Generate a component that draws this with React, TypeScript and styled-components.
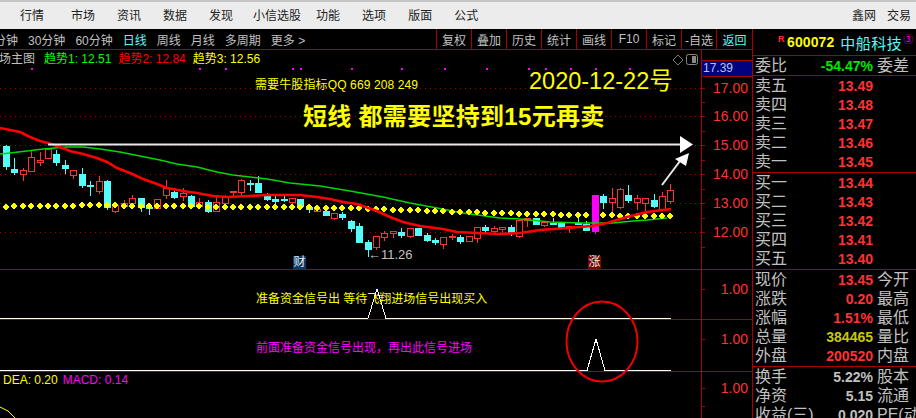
import React from 'react';
import styled, { createGlobalStyle } from 'styled-components';

const RED = '#ff3232';
const GRID = '#a80000';
const CYAN = '#54fcfc';
const YELLOW = '#ffff00';
const MAGENTA = '#ff00ff';
const GREY = '#c0c0c0';

// kind: C falling (filled cyan), H rising (hollow red), R thin red, M limit bar
type Candle = [string, number, number, number, number];

const candles: Candle[] = [
  ['C', 146, 166, 145, 169], ['C', 169, 172, 158, 174], ['H', 170, 174, 168, 180], ['H', 157, 171, 151, 171],
  ['R', 160, 162, 152, 165], ['H', 149, 158, 149, 158], ['C', 154, 162, 150, 165], ['C', 165, 168, 160, 173],
  ['H', 170, 175, 170, 178], ['C', 174, 185, 168, 187], ['C', 185, 186, 181, 195], ['H', 181, 191, 176, 193],
  ['C', 181, 207, 180, 209], ['H', 205, 211, 203, 212], ['H', 203, 206, 200, 207], ['H', 198, 203, 195, 204],
  ['C', 198, 207, 198, 211], ['C', 207, 208, 203, 214], ['H', 199, 208, 199, 208], ['H', 188, 195, 180, 198],
  ['C', 192, 197, 191, 198], ['H', 193, 196, 188, 200], ['C', 196, 206, 195, 207], ['H', 202, 206, 198, 206],
  ['C', 202, 211, 200, 212], ['H', 202, 211, 197, 211], ['H', 197, 203, 195, 203], ['R', 191, 192, 191, 197],
  ['H', 180, 192, 179, 194], ['C', 183, 184, 180, 190], ['C', 183, 192, 176, 192], ['C', 196, 199, 193, 200],
  ['C', 199, 201, 196, 205], ['C', 199, 200, 196, 201], ['H', 198, 202, 198, 203], ['C', 199, 206, 199, 206],
  ['C', 207, 209, 205, 212], ['R', 209, 211, 208, 211], ['C', 211, 215, 211, 215], ['H', 213, 218, 213, 219],
  ['C', 214, 217, 212, 219], ['C', 221, 228, 220, 231], ['C', 226, 242, 223, 242], ['C', 242, 249, 240, 256],
  ['H', 236, 247, 236, 249], ['H', 233, 237, 231, 240], ['H', 231, 233, 231, 237], ['C', 232, 235, 228, 237],
  ['H', 228, 236, 228, 237], ['C', 228, 235, 228, 235], ['C', 235, 240, 233, 241], ['C', 240, 242, 238, 244],
  ['H', 237, 244, 237, 248], ['R', 236, 237, 234, 239], ['C', 237, 241, 235, 243], ['H', 236, 241, 236, 241],
  ['H', 227, 238, 227, 242], ['C', 227, 230, 225, 232], ['H', 228, 231, 226, 233], ['R', 227, 229, 227, 232],
  ['C', 227, 233, 225, 235], ['H', 220, 236, 220, 237], ['R', 218, 220, 218, 226], ['C', 218, 224, 218, 224],
  ['H', 222, 225, 222, 226], ['C', 223, 224, 218, 224], ['C', 223, 228, 223, 228], ['H', 226, 228, 226, 232],
  ['C', 223, 224, 217, 224], ['C', 224, 230, 221, 230], ['M', 195, 231, 195, 233], ['C', 196, 202, 194, 208],
  ['H', 198, 202, 188, 213], ['H', 189, 207, 188, 208], ['C', 195, 200, 185, 202], ['H', 198, 202, 195, 209],
  ['H', 198, 203, 198, 212], ['C', 200, 206, 194, 207], ['H', 196, 210, 192, 210], ['H', 190, 201, 184, 203],
];

const dotY = (i: number) => {
  if (i === 0) return 207;
  if (i < 9) return 206;
  if (i < 14) return 205;
  if (i < 24) return 206;
  if (i < 37) return 207;
  if (i < 43) return 208;
  if (i < 46) return 209;
  if (i < 50) return 210;
  if (i < 53) return 211;
  if (i < 57) return 212;
  if (i < 61) return 213;
  if (i < 66) return 214;
  if (i < 73) return 215;
  return 216;
};

const candleX = (i: number) => Math.round(6 + i * 8.41) + 0.5;

const redLine =
  '0,128 10,130 20,132 30,137 40,141 48,143 60,147 70,151 83,154 97,158 107,162 117,168 130,173 143,179 157,184 167,188 183,191 197,193 213,196 227,197 250,196 267,195 300,195 317,197 330,199 343,202 357,204 377,211 390,217 403,222 420,226 443,229 457,232 477,233 500,234 520,233 540,230 567,228 592,226 607,223 627,217 647,212 671,209';
const greenLine =
  '0,154 10,153 27,151 43,149 67,147 83,147 100,149 120,152 140,156 160,160 177,164 197,167 217,172 233,175 250,177 267,179 290,183 320,186 350,191 383,197 410,203 437,208 463,213 500,218 520,219 550,222 583,223 613,223 633,221 647,220 667,218';

const gridLines = [88, 116, 145, 174, 203, 232];
const markers = [31, 199, 225, 292, 300, 351, 401, 444, 486, 528, 545, 570, 595, 629];

const sellRows = [
  ['卖五', '13.49'],
  ['卖四', '13.48'],
  ['卖三', '13.47'],
  ['卖二', '13.46'],
  ['卖一', '13.45'],
];
const buyRows = [
  ['买一', '13.44'],
  ['买二', '13.43'],
  ['买三', '13.42'],
  ['买四', '13.41'],
  ['买五', '13.40'],
];
const quoteRows = [
  ['现价', '13.45', '今开', RED],
  ['涨跌', '0.20', '最高', RED],
  ['涨幅', '1.51%', '最低', RED],
  ['总量', '384465', '量比', '#c8c800'],
  ['外盘', '200520', '内盘', RED],
];
const financeRows = [
  ['换手', '5.22%', '股本'],
  ['净资', '5.15', '流通'],
  ['收益(三)', '0.020', 'PE(动)'],
];

const MainChart = () => (
  <PlotSvg viewBox="0 50 701 219" width={701} height={219}>
    {gridLines.map(y => (
      <line key={y} x1={0} x2={701} y1={y + 0.5} y2={y + 0.5} stroke={GRID} strokeDasharray="1 4" />
    ))}
    {markers.map(x => (
      <rect key={x} x={x} y={68} width={2} height={2} fill={MAGENTA} />
    ))}
    {candles.map(([kind, top, bottom, high, low], i) => {
      const x = candleX(i);
      const color = kind === 'C' ? CYAN : kind === 'M' ? MAGENTA : RED;
      const hollow = kind === 'H' || kind === 'R';
      return (
        <g key={i} shapeRendering="crispEdges">
          <line x1={x} x2={x} y1={high} y2={low + 1} stroke={color} />
          <rect
            x={x - 3}
            y={top + 0.5}
            width={6}
            height={Math.max(bottom - top, 1)}
            fill={hollow ? '#000' : color}
            stroke={color}
          />
        </g>
      );
    })}
    <polyline points={greenLine} fill="none" stroke="#00d800" strokeWidth={1.4} />
    {candles.map((_, i) =>
      i === 70 ? null : (
        <path
          key={i}
          transform={`translate(${Math.floor(candleX(i))} ${dotY(i)})`}
          d="M-1 -3h2v1h1v1h1v2h-1v1h-1v1h-2v-1h-1v-1h-1v-2h1v-1h1z"
          fill="#ffff00"
          shapeRendering="crispEdges"
        />
      )
    )}
    <polyline points={redLine} fill="none" stroke="#ff0000" strokeWidth={2.6} />
    <line x1={48} x2={682} y1={144.5} y2={144.5} stroke="#e8e8e8" strokeWidth={2} />
    <polygon points="680,136 693,144.5 680,153" fill="#fff" />
    <line x1={662} y1={185} x2={680} y2={161} stroke="#e8e8e8" strokeWidth={2} />
    <polygon points="689,153 675,159 686,166" fill="#fff" />
  </PlotSvg>
);

const AxisScale = ({ viewBox, height, ticks, labels }: {
  viewBox: string;
  height: number;
  ticks: number[];
  labels: [string, number][];
}) => (
  <AxisSvg viewBox={viewBox} width={50} height={height}>
    {ticks.map(y => (
      <line key={y} x1={0} x2={3} y1={y + 0.5} y2={y + 0.5} stroke={GRID} />
    ))}
    {labels.map(([text, y]) => (
      <AxisText key={y} x={46} y={y + 5} textAnchor="end">{text}</AxisText>
    ))}
  </AxisSvg>
);

const SignalTrace = ({ peakX, peakY, baseY, width }: { peakX: number; peakY: number; baseY: number; width: number }) => (
  <polyline
    points={`0,${baseY} ${peakX - 9},${baseY} ${peakX},${peakY} ${peakX + 9},${baseY} ${width},${baseY}`}
    fill="none"
    stroke="#fff"
    strokeWidth={1}
    shapeRendering="crispEdges"
  />
);

const App = () => (
  <>
    <GlobalStyle />
    <Page>
      <MenuBar>
        <MenuItem>行情</MenuItem>
        <MenuItem $shift={5}>市场</MenuItem>
        <MenuItem>资讯</MenuItem>
        <MenuItem>数据</MenuItem>
        <MenuItem>发现</MenuItem>
        <MenuItem $shift={-2}>小信选股</MenuItem>
        <MenuItem $shift={-7}>功能</MenuItem>
        <MenuItem>选项</MenuItem>
        <MenuItem>版面</MenuItem>
        <MenuItem>公式</MenuItem>
        <MenuRight>
          <span>鑫网</span>
          <span>交易</span>
        </MenuRight>
      </MenuBar>

      <Workspace>
        <ChartColumn>
          <Toolbar>
            <PeriodList>
              <Period>分钟</Period>
              <Period>30分钟</Period>
              <Period>60分钟</Period>
              <Period $active>日线</Period>
              <Period>周线</Period>
              <Period>月线</Period>
              <Period>多周期</Period>
              <Period>更多 &gt;</Period>
            </PeriodList>
            <ToolList>
              <ToolCell>复权</ToolCell>
              <ToolCell>叠加</ToolCell>
              <ToolCell>历史</ToolCell>
              <ToolCell>统计</ToolCell>
              <ToolCell>画线</ToolCell>
              <ToolCell>F10</ToolCell>
              <ToolCell>标记</ToolCell>
              <ToolCell>-自选</ToolCell>
              <ToolCell $active $wide>返回</ToolCell>
            </ToolList>
          </Toolbar>

          <Pane $height={220}>
            <Plot>
              <MainChart />
              <Legend>
                <LegendTitle>场主图</LegendTitle>
                <LegendItem $color="#00ff00">趋势1: 12.51</LegendItem>
                <LegendItem $color="#ff0000">趋势2: 12.84</LegendItem>
                <LegendItem $color={YELLOW}>趋势3: 12.56</LegendItem>
              </Legend>
              <Note $x={255} $y={25} $color={YELLOW} $spacing={0.12}>需要牛股指标QQ 669 208 249</Note>
              <Note $x={529} $y={12} $color={YELLOW} $size={23.5}>2020-12-22号</Note>
              <Note $x={303} $y={47} $color={YELLOW} $size={24} $bold $spacing={0.3}>短线 都需要坚持到15元再卖</Note>
              <Note $x={368} $y={197} $color={GREY} $size={13}>←11.26</Note>
              <Badge $x={293} $bg="#0c3a68">财</Badge>
              <Badge $x={588} $bg="#7a0000">涨</Badge>
              <ToolIcon width={26} height={12} viewBox="0 0 26 12">
                <path d="M6 1l5 5-5 5-5-5z" fill="none" stroke="#777" />
                <rect x="14.5" y="0.5" width="11" height="10" rx="2" fill="none" stroke="#888" />
                <rect x="20" y="2" width="4" height="7" fill="#888" />
              </ToolIcon>
            </Plot>
            <Axis>
              <PriceTag>17.39</PriceTag>
              <AxisScale
                viewBox="0 50 50 219"
                height={219}
                ticks={[88, 102, 116, 131, 145, 160, 174, 189, 203, 218, 232, 247]}
                labels={[['17.00', 88], ['16.00', 116], ['15.00', 145], ['14.00', 174], ['13.00', 203], ['12.00', 232]]}
              />
            </Axis>
          </Pane>

          <Pane $height={50}>
            <Plot>
              <PlotSvg viewBox="0 270 701 49" width={701} height={49}>
                <SignalTrace peakX={377} peakY={289} baseY={318.5} width={671} />
              </PlotSvg>
              <Note $x={256} $y={19} $color={YELLOW}>准备资金信号出 等待飞翔进场信号出现买入</Note>
            </Plot>
            <Axis>
              <AxisScale viewBox="0 270 50 49" height={49} ticks={[289]} labels={[['1.00', 289]]} />
            </Axis>
          </Pane>

          <Pane $height={52}>
            <Plot>
              <PlotSvg viewBox="0 320 701 51" width={701} height={51}>
                <SignalTrace peakX={596} peakY={339} baseY={370.5} width={671} />
              </PlotSvg>
              <Note $x={256} $y={18} $color={MAGENTA}>前面准备资金信号出现，再出此信号进场</Note>
            </Plot>
            <Axis>
              <AxisScale viewBox="0 320 50 51" height={51} ticks={[339]} labels={[['1.00', 339]]} />
            </Axis>
          </Pane>

          <Pane $height={46} $last>
            <Plot>
              <PlotSvg viewBox="0 372 701 46" width={701} height={46}>
                <polyline points="0,407 8,411 15,418" fill="none" stroke={YELLOW} />
              </PlotSvg>
              <Legend $tight>
                <LegendItem $color={YELLOW}>DEA: 0.20</LegendItem>
                <LegendItem $color={MAGENTA}>MACD: 0.14</LegendItem>
              </Legend>
            </Plot>
            <Axis>
              <AxisScale viewBox="0 372 50 46" height={46} ticks={[388, 406]} labels={[['1.00', 388]]} />
            </Axis>
          </Pane>

          <Circle width={76} height={85} viewBox="0 0 76 85">
            <ellipse cx={38} cy={42.5} rx={35.5} ry={40} fill="none" stroke="#ee0000" strokeWidth={2} />
          </Circle>
        </ChartColumn>

        <QuotePanel>
          <StockHeader>
            <Rights>R</Rights>
            <StockCode>600072</StockCode>
            <StockName>中船科技</StockName>
            <StockMark>③</StockMark>
          </StockHeader>
          <QuoteRow $height={20} $divider>
            <span>委比</span>
            <Value $color="#00e600">-54.47%</Value>
            <span>委差</span>
          </QuoteRow>
          <QuoteGroup>
            {sellRows.map(([label, price]) => (
              <QuoteRow key={label}>
                <span>{label}</span>
                <Value $color={RED}>{price}</Value>
              </QuoteRow>
            ))}
          </QuoteGroup>
          <QuoteGroup>
            {buyRows.map(([label, price]) => (
              <QuoteRow key={label}>
                <span>{label}</span>
                <Value $color={RED}>{price}</Value>
              </QuoteRow>
            ))}
          </QuoteGroup>
          <QuoteGroup>
            {quoteRows.map(([label, value, side, color]) => (
              <QuoteRow key={label}>
                <span>{label}</span>
                <Value $color={color}>{value}</Value>
                <span>{side}</span>
              </QuoteRow>
            ))}
          </QuoteGroup>
          <FinanceGroup>
            {financeRows.map(([label, value, side]) => (
              <QuoteRow key={label} $height={19}>
                <span>{label}</span>
                <Value $color={GREY}>{value}</Value>
                <span>{side}</span>
              </QuoteRow>
            ))}
          </FinanceGroup>
        </QuotePanel>
      </Workspace>
    </Page>
  </>
);

export default App;

const GlobalStyle = createGlobalStyle`
  html, body {
    margin: 0;
    background: #000;
    font-family: "Liberation Sans", "Noto Sans CJK SC", sans-serif;
  }
`;

const Page = styled.div`
  width: 916px;
  height: 418px;
  overflow: hidden;
  display: flex;
  flex-direction: column;
  background: #000;
`;

const MenuBar = styled.div`
  height: 29px;
  box-sizing: border-box;
  flex: none;
  display: flex;
  align-items: center;
  gap: 22px;
  padding: 0 5px 3px 20px;
  border-top: 2px solid #c4c4c4;
  background: #ececec;
  color: #222;
  font-size: 12px;
`;

const MenuItem = styled.span<{ $shift?: number }>`
  margin-left: ${p => p.$shift ?? 0}px;
`;

const MenuRight = styled.div`
  margin-left: auto;
  display: flex;
  gap: 11px;
`;

const Workspace = styled.div`
  flex: 1;
  display: flex;
  min-height: 0;
`;

const ChartColumn = styled.div`
  position: relative;
  width: 752px;
  flex: none;
  display: flex;
  flex-direction: column;
`;

const Toolbar = styled.div`
  height: 21px;
  box-sizing: border-box;
  flex: none;
  display: flex;
  justify-content: space-between;
  border-bottom: 1px solid ${GRID};
  font-size: 12px;
  color: ${GREY};
`;

const PeriodList = styled.div`
  display: flex;
  align-items: center;
  gap: 10px;
  margin-left: -6px;
`;

const Period = styled.span<{ $active?: boolean }>`
  color: ${p => (p.$active ? CYAN : GREY)};
`;

const ToolList = styled.div`
  display: flex;
`;

const ToolCell = styled.div<{ $active?: boolean; $wide?: boolean }>`
  width: ${p => (p.$wide ? 36 : 35)}px;
  box-sizing: border-box;
  display: flex;
  align-items: center;
  justify-content: center;
  border-left: 1px solid ${GRID};
  color: ${p => (p.$active ? CYAN : GREY)};
`;

const Pane = styled.div<{ $height: number; $last?: boolean }>`
  height: ${p => p.$height}px;
  box-sizing: border-box;
  flex: none;
  display: flex;
  border-bottom: ${p => (p.$last ? 'none' : `1px solid ${GRID}`)};
`;

const Plot = styled.div`
  position: relative;
  width: 701px;
  flex: none;
  overflow: hidden;
`;

const PlotSvg = styled.svg`
  display: block;
`;

const Axis = styled.div`
  position: relative;
  width: 51px;
  box-sizing: border-box;
  flex: none;
  border-left: 1px solid ${GRID};
`;

const AxisSvg = styled.svg`
  display: block;
`;

const AxisText = styled.text`
  font-size: 14px;
  fill: ${RED};
`;

const PriceTag = styled.div`
  position: absolute;
  top: 10px;
  left: 0;
  width: 50px;
  height: 17px;
  box-sizing: border-box;
  padding-left: 1px;
  border-top: 1px solid ${GRID};
  border-bottom: 1px solid ${GRID};
  background: #000080;
  color: #b8c4e0;
  font-size: 12px;
  line-height: 15px;
`;

const Legend = styled.div<{ $tight?: boolean }>`
  position: absolute;
  top: ${p => (p.$tight ? 1 : 2)}px;
  left: ${p => (p.$tight ? 3 : -1)}px;
  display: flex;
  gap: ${p => (p.$tight ? 5 : 7)}px;
  color: ${GREY};
  font-size: 12px;
  line-height: 15px;
`;

const LegendTitle = styled.span`
  margin-right: 2px;
`;

const LegendItem = styled.span<{ $color: string }>`
  color: ${p => p.$color};
`;

const Note = styled.div<{ $x: number; $y: number; $color: string; $size?: number; $bold?: boolean; $spacing?: number }>`
  position: absolute;
  left: ${p => p.$x}px;
  top: ${p => p.$y}px;
  color: ${p => p.$color};
  font-size: ${p => p.$size ?? 12}px;
  font-weight: ${p => (p.$bold ? 700 : 400)};
  letter-spacing: ${p => p.$spacing ?? 0}px;
  white-space: nowrap;
`;

const Badge = styled.div<{ $x: number; $bg: string }>`
  position: absolute;
  left: ${p => p.$x}px;
  bottom: 0;
  width: 13px;
  height: 13px;
  background: ${p => p.$bg};
  color: #e8e8e8;
  font-size: 12px;
  line-height: 13px;
  text-align: center;
`;

const ToolIcon = styled.svg`
  position: absolute;
  top: 4px;
  right: 3px;
`;

const Circle = styled.svg`
  position: absolute;
  left: 564px;
  top: 270px;
`;

const QuotePanel = styled.div`
  flex: 1;
  box-sizing: border-box;
  display: flex;
  flex-direction: column;
  border-left: 1px solid ${GRID};
  color: ${GREY};
  font-size: 16px;
`;

const StockHeader = styled.div`
  height: 27px;
  box-sizing: border-box;
  flex: none;
  display: flex;
  align-items: center;
  padding-left: 25px;
  border-bottom: 1px solid ${GRID};
  white-space: nowrap;
`;

const Rights = styled.span`
  width: 9px;
  margin-bottom: 6px;
  color: ${RED};
  font-size: 9px;
  font-weight: 700;
`;

const StockCode = styled.span`
  color: ${YELLOW};
  font-size: 14px;
  font-weight: 700;
  letter-spacing: 0.1px;
`;

const StockName = styled.span`
  margin-left: 6px;
  color: ${CYAN};
  font-size: 15px;
  letter-spacing: 0.5px;
`;

const StockMark = styled.span`
  margin: 0 0 8px 1px;
  color: ${MAGENTA};
  font-size: 10px;
`;

const QuoteGroup = styled.div`
  height: 97px;
  box-sizing: border-box;
  flex: none;
  display: flex;
  flex-direction: column;
  padding-bottom: 1px;
  border-bottom: 1px solid ${GRID};
`;

const FinanceGroup = styled.div`
  flex: 1;
  display: flex;
  flex-direction: column;
`;

const QuoteRow = styled.div<{ $height?: number; $divider?: boolean }>`
  ${p => (p.$height ? `height: ${p.$height}px; flex: none;` : 'flex: 1;')}
  box-sizing: border-box;
  display: grid;
  grid-template-columns: 41px 73px auto;
  column-gap: 4px;
  align-items: center;
  padding-left: 2px;
  white-space: nowrap;
  line-height: 1;
  ${p => (p.$divider ? `border-bottom: 1px solid ${GRID};` : '')}
`;

const Value = styled.span<{ $color: string }>`
  color: ${p => p.$color};
  font-size: 14px;
  font-weight: 700;
  text-align: right;
`;
